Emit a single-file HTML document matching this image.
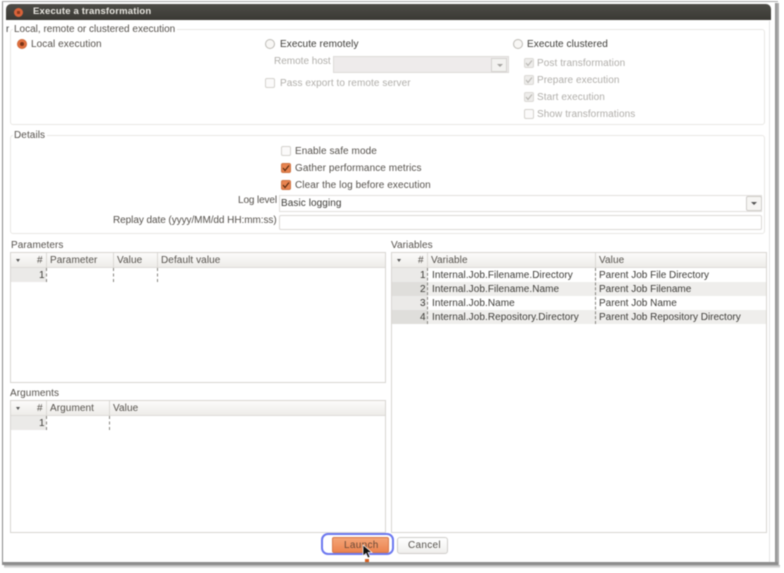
<!DOCTYPE html>
<html><head><meta charset="utf-8">
<style>
html,body{margin:0;padding:0;background:#fff;width:784px;height:573px;overflow:hidden}
#r{position:relative;width:784px;height:573px;overflow:hidden;font-family:"Liberation Sans","DejaVu Sans",sans-serif;font-size:10px;letter-spacing:.08px;color:#55514c;filter:blur(.45px)}
#r div{position:absolute;box-sizing:border-box}
.t{white-space:nowrap;line-height:12px;height:12px;margin-top:1px}
.d{color:#b0aeaa}
.dk{color:#3c3b37}
.box{border:1px solid #e8e7e4;border-radius:3px;background:#fff}
.rad{width:10px;height:10px;border-radius:50%;border:1px solid #bdbbb6;background:#f8f7f5}
.cb{width:10px;height:10px;border-radius:2px;border:1px solid #d4d2ce;background:#fbfafa}
.cbd{background:#eeedeb;border-color:#dad9d5}
.cbo{background:#e8834f;border-color:#cf7444}
.tab{border:1px solid #d8d6d2;background:#fff}
.hd{background:linear-gradient(#fcfbfa,#eeece9);height:15px;border-bottom:1px solid #dedcd8}
.sep{width:1px;background:#dbd9d5}
.dash{width:0;border-left:1px dashed #86847f}
.num{background:#ebeae8}
</style></head><body><div id="r">
<div style="left:2px;top:1px;width:776px;height:1px;background:#a8a8a8"></div>
<div style="left:2px;top:2px;width:1px;height:562px;background:#8a8a8a"></div>
<div style="left:775px;top:3px;width:4px;height:564px;background:linear-gradient(90deg,#8d8d8d,#b5b5b5)"></div>
<div style="left:2px;top:562px;width:776px;height:3px;background:#8d8d8d"></div>
<div style="left:4px;top:565px;width:776px;height:3px;background:linear-gradient(#b0b0b0,#f0f0f0)"></div>
<div style="left:6px;top:4px;width:765px;height:16px;border-radius:5px 5px 0 0;background:linear-gradient(#4d4c47,#3a3934)"></div>
<div style="left:769px;top:21px;width:1px;height:541px;background:#e6e6e6"></div>
<div style="left:14px;top:8px;width:9px;height:9px;border-radius:50%;background:#d9633a"></div>
<div style="left:17px;top:11px;width:3px;height:3px;background:#8a3a1c"></div>
<div class="t" style="left:33px;top:5px;color:#e8e6e0;font-weight:bold;font-size:9.5px;letter-spacing:.18px">Execute a transformation</div>
<div class="t" style="left:6px;top:23px;width:3px;overflow:hidden;color:#444">r</div>

<div class="box" style="left:10px;top:29px;width:755px;height:96px"></div>
<div class="t" style="left:13px;top:23px;background:#fff;padding:0 2px 0 1px;letter-spacing:0">Local, remote or clustered execution</div>
<div class="rad" style="left:17px;top:39px;background:#e2703f;border-color:#d06a3a"></div>
<div style="left:20px;top:42px;width:4px;height:4px;border-radius:50%;background:#7a3518"></div>
<div class="t" style="left:31px;top:38px">Local execution</div>
<div class="rad" style="left:265px;top:39px"></div>
<div class="t dk" style="left:280px;top:38px">Execute remotely</div>
<div class="t d" style="left:274px;top:55px;letter-spacing:0">Remote host</div>
<div style="left:333px;top:56px;width:176px;height:17px;background:#eeebeb;border:1px solid #dddbd9"></div>
<div style="left:491px;top:58px;width:16px;height:14px;background:#f3f2f0;border:1px solid #d5d3d0"></div>
<div style="left:497px;top:64px;border:3px solid transparent;border-top:3px solid #a5a3a0;width:0;height:0"></div>
<div class="cb" style="left:265px;top:78px"></div>
<div class="t d" style="left:280px;top:77px">Pass export to remote server</div>
<div class="rad" style="left:513px;top:39px"></div>
<div class="t dk" style="left:527px;top:38px">Execute clustered</div>
<div class="cb cbd" style="left:524px;top:58px"></div>
<div class="t d" style="left:537px;top:57px">Post transformation</div>
<div class="cb cbd" style="left:524px;top:75px"></div>
<div class="t d" style="left:537px;top:74px">Prepare execution</div>
<div class="cb cbd" style="left:524px;top:92px"></div>
<div class="t d" style="left:537px;top:91px">Start execution</div>
<svg style="position:absolute;left:524px;top:58px" width="10" height="44" viewBox="0 0 10 44"><path d="M2 5l2 2.500 4-5M2 22l2 2.500 4-5M2 39l2 2.500 4-5" fill="none" stroke="#b8b6b2" stroke-width="1.1"/></svg>
<div class="cb" style="left:524px;top:109px"></div>
<div class="t d" style="left:537px;top:108px">Show transformations</div>

<div class="box" style="left:10px;top:135px;width:755px;height:99px"></div>
<div class="t" style="left:13px;top:129px;background:#fff;padding:0 2px 0 1px">Details</div>
<div class="cb" style="left:281px;top:146px"></div>
<div class="t" style="left:295px;top:145px">Enable safe mode</div>
<div class="cb cbo" style="left:281px;top:163px"></div>
<div class="t" style="left:295px;top:162px">Gather performance metrics</div>
<div class="cb cbo" style="left:281px;top:180px"></div>
<div class="t" style="left:295px;top:179px">Clear the log before execution</div>
<svg style="position:absolute;left:281px;top:163px" width="10" height="28" viewBox="0 0 10 28"><path d="M2 5l2 2.500 4-5M2 22l2 2.500 4-5" fill="none" stroke="#5a2c12" stroke-width="1.2"/></svg>
<div class="t" style="left:238px;top:194px;letter-spacing:-.12px">Log level</div>
<div style="left:279px;top:195px;width:483px;height:17px;background:#fff;border:1px solid #e2e0dd"></div>
<div class="t dk" style="left:281px;top:197px">Basic logging</div>
<div style="left:746px;top:196px;width:16px;height:15px;background:#f6f5f3;border:1px solid #cfcdca;border-radius:2px"></div>
<div style="left:751px;top:202px;border:3px solid transparent;border-top:3px solid #555;width:0;height:0"></div>
<div class="t" style="left:113px;top:214px;letter-spacing:-.06px">Replay date (yyyy/MM/dd HH:mm:ss)</div>
<div style="left:279px;top:215px;width:483px;height:15px;background:#fff;border:1px solid #dbd9d6;border-radius:2px"></div>

<div class="t" style="left:11px;top:239px">Parameters</div>
<div class="tab" style="left:10px;top:252px;width:376px;height:131px"></div>
<div class="hd" style="left:11px;top:253px;width:374px"></div>
<div style="left:16px;top:259px;border:2.500px solid transparent;border-top:3px solid #555;width:0;height:0"></div>
<div class="t" style="left:37px;top:254px">#</div>
<div class="sep" style="left:46px;top:253px;height:15px"></div>
<div class="t" style="left:50px;top:254px">Parameter</div>
<div class="sep" style="left:113px;top:253px;height:15px"></div>
<div class="t" style="left:117px;top:254px">Value</div>
<div class="sep" style="left:157px;top:253px;height:15px"></div>
<div class="t" style="left:161px;top:254px">Default value</div>
<div class="num" style="left:11px;top:268px;width:35px;height:14px"></div>
<div class="t dk" style="left:39px;top:269px">1</div>
<div class="dash" style="left:46px;top:268px;height:14px"></div>
<div class="dash" style="left:113px;top:268px;height:14px"></div>
<div class="dash" style="left:157px;top:268px;height:14px"></div>

<div class="t" style="left:10px;top:387px">Arguments</div>
<div class="tab" style="left:10px;top:400px;width:376px;height:133px"></div>
<div class="hd" style="left:11px;top:401px;width:374px"></div>
<div style="left:16px;top:407px;border:2.500px solid transparent;border-top:3px solid #555;width:0;height:0"></div>
<div class="t" style="left:37px;top:402px">#</div>
<div class="sep" style="left:46px;top:401px;height:15px"></div>
<div class="t" style="left:50px;top:402px">Argument</div>
<div class="sep" style="left:109px;top:401px;height:15px"></div>
<div class="t" style="left:113px;top:402px">Value</div>
<div class="num" style="left:11px;top:416px;width:35px;height:14px"></div>
<div class="t dk" style="left:39px;top:417px">1</div>
<div class="dash" style="left:46px;top:416px;height:14px"></div>
<div class="dash" style="left:109px;top:416px;height:14px"></div>

<div class="t" style="left:391px;top:239px">Variables</div>
<div class="tab" style="left:391px;top:252px;width:376px;height:281px"></div>
<div class="hd" style="left:392px;top:253px;width:374px"></div>
<div style="left:397px;top:259px;border:2.500px solid transparent;border-top:3px solid #555;width:0;height:0"></div>
<div class="t" style="left:418px;top:254px">#</div>
<div class="sep" style="left:427px;top:253px;height:15px"></div>
<div class="t" style="left:431px;top:254px">Variable</div>
<div class="sep" style="left:595px;top:253px;height:15px"></div>
<div class="t" style="left:599px;top:254px">Value</div>
<div class="num" style="left:392px;top:268px;width:35px;height:56px"></div>
<div style="left:427px;top:282px;width:339px;height:14px;background:#efeeec"></div>
<div style="left:427px;top:310px;width:339px;height:14px;background:#efeeec"></div>
<div style="left:392px;top:282px;width:35px;height:14px;background:#dfdedb"></div>
<div style="left:392px;top:310px;width:35px;height:14px;background:#dfdedb"></div>
<div class="t dk" style="left:420px;top:269px">1</div>
<div class="t dk" style="left:420px;top:283px">2</div>
<div class="t dk" style="left:420px;top:297px">3</div>
<div class="t dk" style="left:420px;top:311px">4</div>
<div class="dash" style="left:427px;top:268px;height:56px"></div>
<div class="dash" style="left:595px;top:268px;height:56px"></div>
<div class="t dk" style="left:432px;top:269px;letter-spacing:.06px">Internal.Job.Filename.Directory</div>
<div class="t dk" style="left:432px;top:283px;letter-spacing:.06px">Internal.Job.Filename.Name</div>
<div class="t dk" style="left:432px;top:297px;letter-spacing:.06px">Internal.Job.Name</div>
<div class="t dk" style="left:432px;top:311px;letter-spacing:.06px">Internal.Job.Repository.Directory</div>
<div class="t dk" style="left:599px;top:269px;letter-spacing:0">Parent Job File Directory</div>
<div class="t dk" style="left:599px;top:283px;letter-spacing:0">Parent Job Filename</div>
<div class="t dk" style="left:599px;top:297px;letter-spacing:0">Parent Job Name</div>
<div class="t dk" style="left:599px;top:311px;letter-spacing:0">Parent Job Repository Directory</div>

<div style="left:321px;top:533px;width:73px;height:22px;border:2px solid #6c78f0;border-radius:7px;background:#fff"></div>
<div style="left:332px;top:537px;width:57px;height:16px;border-radius:2px;background:linear-gradient(#f4a578,#ec8450);border:1px solid #d8794a"></div>
<div class="t" style="left:344px;top:539px;color:#6b4a38;letter-spacing:.3px">Launch</div>
<div style="left:397px;top:537px;width:51px;height:17px;border:1px solid #cfcdca;border-radius:3px;background:linear-gradient(#fff,#f0efed)"></div>
<div class="t" style="left:408px;top:539px;letter-spacing:.3px">Cancel</div>
<svg style="position:absolute;left:362px;top:544px" width="12" height="18" viewBox="0 0 12 18"><path d="M1 1v11l3-2.500 2 4.500 2-1-2-4.500h4z" fill="#111" stroke="#fff" stroke-width=".7"/><rect x="3" y="15" width="4" height="3" fill="#d9601f"/></svg>
</div></body></html>
